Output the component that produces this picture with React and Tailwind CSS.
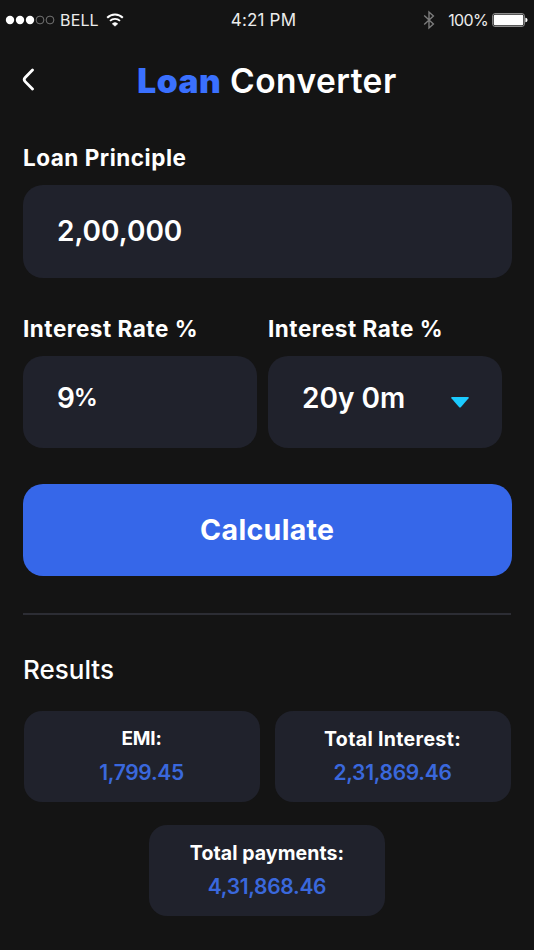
function SignalDots() {
  return (
    <svg width="50" height="12" viewBox="0 0 50 12">
      {[5, 15, 25].map((x) => (
        <circle key={x} cx={x} cy="6" r="4.2" fill="#fff" />
      ))}
      {[35, 45].map((x) => (
        <circle key={x} cx={x} cy="6" r="3.9" fill="none" stroke="#8a8a8a" strokeWidth="0.8" />
      ))}
    </svg>
  );
}

function WifiIcon() {
  return (
    <svg width="18" height="14" viewBox="0 0 18 14" fill="none" stroke="#fff">
      <path d="M1.2 4.8a11 11 0 0 1 15.6 0" strokeWidth="2" />
      <path d="M4 7.9a7.2 7.2 0 0 1 10 0" strokeWidth="1.9" />
      <path d="M9 13.2 6.2 10.8a4 4 0 0 1 5.6 0z" fill="#fff" stroke="#fff" strokeWidth="0.5" />
    </svg>
  );
}

function BluetoothIcon() {
  return (
    <svg width="12" height="20" viewBox="0 0 12 20" fill="none" stroke="#7c7c7c" strokeWidth="1.4">
      <path d="M1.2 5.6 10.4 14 6 18V2l4.4 4-9.2 8.4" />
    </svg>
  );
}

function BatteryIcon() {
  return (
    <svg width="36" height="14" viewBox="0 0 36 14">
      <rect x="0.7" y="0.6" width="31.6" height="12.8" rx="2.2" fill="none" stroke="#9b9b9b" strokeWidth="1" />
      <rect x="1.8" y="1.7" width="29.4" height="10.6" rx="1.2" fill="#fff" />
      <path d="M33.4 4.8c1.5.3 2.1 1.1 2.1 2.2s-.6 1.9-2.1 2.2z" fill="#fff" />
    </svg>
  );
}

function StatusBar() {
  return (
    <div className="flex h-10 items-center text-base text-[#ececec]">
      <div className="flex flex-1 items-center pl-[5px]">
        <SignalDots />
        <span className="ml-[5px] mr-[7px] tracking-[0.01em]">BELL</span>
        <WifiIcon />
      </div>
      <span className="pt-0.5 pr-1.5 text-[17px] tracking-[0.01em]">4:21 PM</span>
      <div className="flex flex-1 items-center justify-end pr-[6px]">
        <BluetoothIcon />
        <span className="ml-[13px] mr-1 tracking-[-0.04em]">100%</span>
        <BatteryIcon />
      </div>
    </div>
  );
}

function Label({ children }) {
  return (
    <div className="h-7 text-[22.5px] leading-[29px] font-bold tracking-[0.023em] text-white">{children}</div>
  );
}

function ResultCard({ title, value, titleClass }) {
  return (
    <div className="flex h-[91px] w-[236px] flex-col items-center rounded-[18px] bg-[#20222c] pt-[15px]">
      <span className={`h-[26px] leading-[26px] font-bold text-white ${titleClass}`}>{title}</span>
      <span className="mt-2 text-[21px] leading-[26px] font-semibold tracking-[-0.015em] text-[#3a68dc]">{value}</span>
    </div>
  );
}

export default function App() {
  return (
    <main className="flex h-[950px] w-[534px] flex-col overflow-hidden bg-[#141414] font-['Inter',sans-serif] whitespace-nowrap">
      <StatusBar />

      <header className="mt-5 grid h-10 grid-cols-[40px_1fr_40px] items-center px-[22px]">
        <svg className="-mt-px" width="14" height="24" viewBox="0 0 14 24" fill="none" stroke="#fff" strokeWidth="2.8" strokeLinecap="round" strokeLinejoin="round">
          <path d="M10.5 1.9 3.2 9.4q-2 2.1 0 4.2l7.3 7.5" />
        </svg>
        <h1 className="pt-px text-center text-[33.5px] leading-10 font-semibold tracking-[0.014em] text-white">
          <span className="font-black text-[#3a70fe]">Loan</span> Converter
        </h1>
      </header>

      <section className="mt-[43px] px-[23px]">
        <Label>Loan Principle</Label>
        <div className="mt-[14px] flex h-[92.5px] w-[488.5px] items-center rounded-[20px] bg-[#20222c] pb-px pl-[34px] text-[28px] font-semibold text-white">
          2,00,000
        </div>
      </section>

      <section className="mt-9 flex gap-[11.5px] px-[23px]">
        <div>
          <Label>Interest Rate %</Label>
          <div className="mt-[14px] flex h-[92px] w-[233.5px] items-center rounded-[20px] bg-[#20222c] pb-2 pl-[34px] text-[28px] font-semibold text-white">
            <span className="tracking-[-0.04em]">9</span>
            <span className="pt-px text-[24px]">%</span>
          </div>
        </div>
        <div>
          <Label>Interest Rate %</Label>
          <div className="mt-[14px] flex h-[92px] w-[233.5px] items-center justify-between rounded-[20px] bg-[#20222c] pr-[33px] pb-2 pl-[34px] text-[28px] font-semibold text-white">
            20y 0m
            <svg className="mt-2.5" width="18" height="11" viewBox="0 0 18 11" fill="#1bcbff">
              <path d="M1 0h16q1.2.3.6 1.3L10 10.1q-1 1-2 0L.4 1.3Q-.2.3 1 0z" />
            </svg>
          </div>
        </div>
      </section>

      <section className="mt-9 px-[23px]">
        <button className="block h-[92.5px] w-[488.5px] rounded-[20px] bg-[#3667e9] pt-px text-[28.5px] font-bold tracking-[0.012em] text-white">
          Calculate
        </button>
        <div className="mt-[37px] h-[1.5px] bg-[#2c2d34]" />
      </section>

      <section className="mt-[39.5px] px-[23px]">
        <h2 className="pb-[25px] text-[26px] leading-8 font-medium text-white">Results</h2>
        <div className="flex flex-wrap justify-center gap-x-[15px] gap-y-[23px]">
          <ResultCard title="EMI:" value="1,799.45" titleClass="text-[19px] tracking-[-0.01em]" />
          <ResultCard title="Total Interest:" value="2,31,869.46" titleClass="text-[19.5px] tracking-[0.018em]" />
          <ResultCard title="Total payments:" value="4,31,868.46" titleClass="text-[19.5px] tracking-[0.004em]" />
        </div>
      </section>
    </main>
  );
}
